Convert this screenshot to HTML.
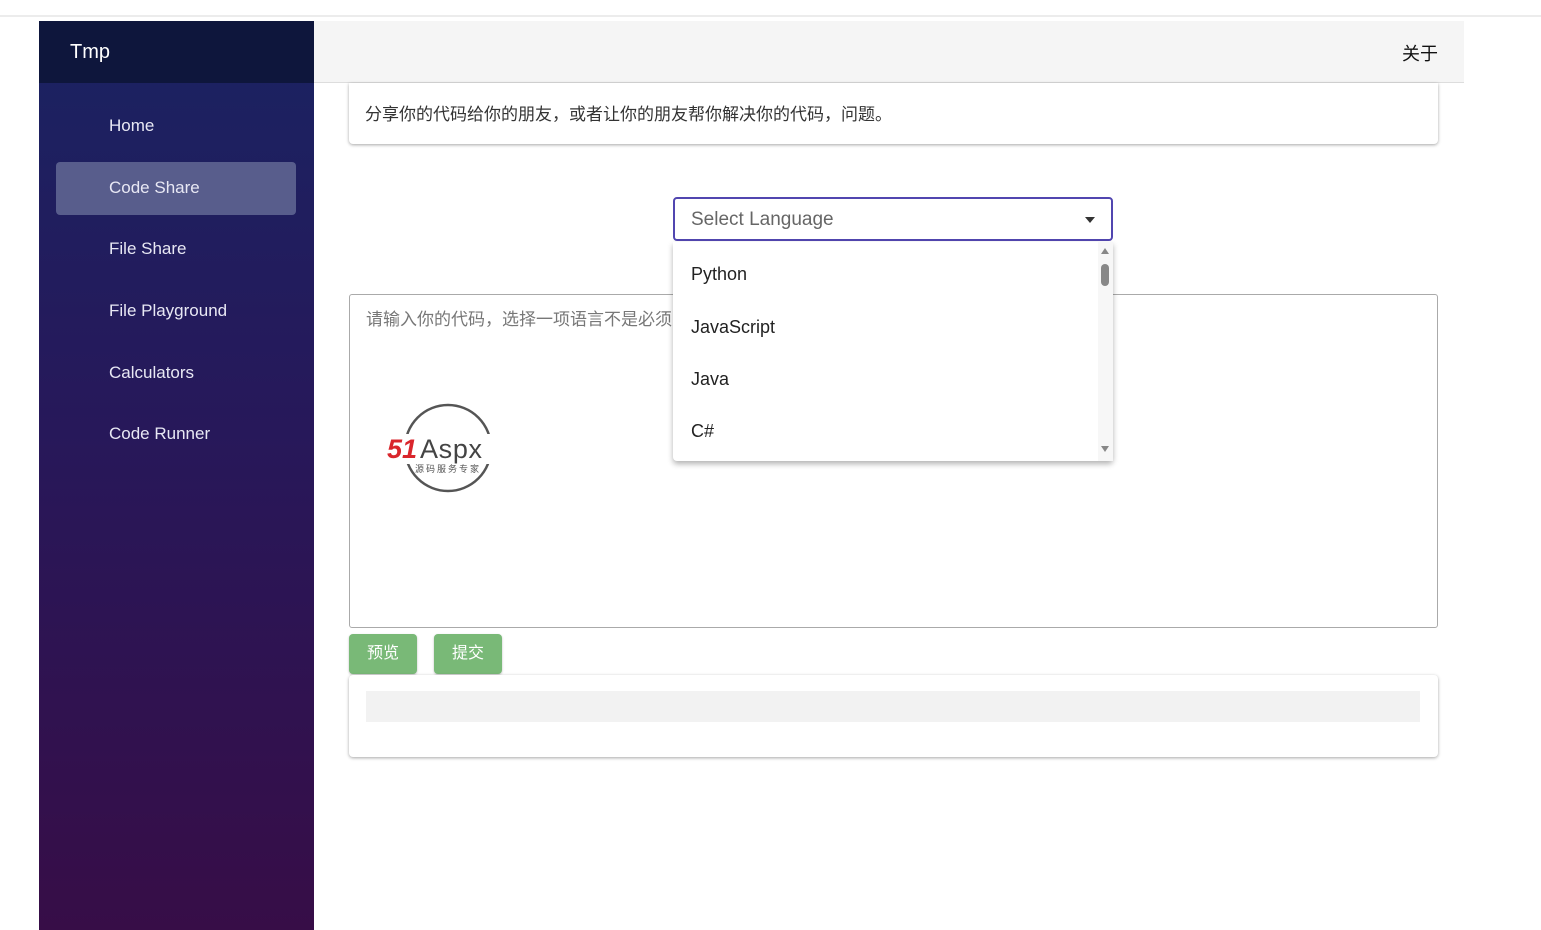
<!DOCTYPE html>
<html><head><meta charset="utf-8"><style>
*{box-sizing:border-box;margin:0;padding:0}
body{width:1541px;height:930px;overflow:hidden;background:#fff;font-family:"Liberation Sans","Noto Sans CJK SC",sans-serif;position:relative}
.topbar{position:absolute;left:0;top:0;width:1541px;height:17px;background:#fff;border-bottom:2px solid #ececec}
.side{position:absolute;left:39px;top:21px;width:275px;height:909px;background:linear-gradient(#1a2362 0%,#27185a 45%,#370d47 100%)}
.side .hd{height:62px;background:#0e163c;color:#fff;font-size:20px;padding:20px 0 0 31px}
.nav{position:absolute;left:17px;width:240px;height:53px;border-radius:4px;color:#e8e8f4;font-size:17px;padding:16px 0 0 53px}
.nav.act{background:#585d8c}
.head{position:absolute;left:314px;top:21px;width:1150px;height:62px;background:#f5f5f5;border-bottom:1px solid #ddd}
.head span{position:absolute;right:26px;top:19px;font-size:18px;color:#111}
.card{position:absolute;background:#fff;border-radius:4px;box-shadow:0 1px 3px rgba(0,0,0,.35)}
.sel{position:absolute;left:673px;top:197px;width:440px;height:44px;border:2px solid #5146b0;border-radius:4px;font-size:19px;color:#666;padding:10px 0 0 16px;background:#fff}
.sel:after{content:"";position:absolute;right:16px;top:18px;border:5px solid transparent;border-top:6px solid #333}
.ta{position:absolute;left:349px;top:294px;width:1089px;height:334px;border:1px solid #aaa;border-radius:3px;font-size:17px;color:#777;padding:10px 16px}
.dd{position:absolute;left:673px;top:242px;width:440px;height:219px;background:#fff;box-shadow:0 3px 6px rgba(0,0,0,.3);border-radius:0 0 4px 4px}
.dd .it{position:absolute;left:18px;font-size:18px;color:#222}
.sb{position:absolute;left:425px;top:0;width:15px;height:219px;background:#f7f7f7}
.btn{position:absolute;top:634px;width:68px;height:40px;background:#79b977;border-radius:4px;color:#fff;font-size:16px;text-align:center;line-height:40px;box-shadow:0 1px 2px rgba(0,0,0,.25)}
</style></head><body>
<div class="topbar"></div>
<div class="side"><div class="hd">Tmp</div>
<div class="nav" style="top:79px">Home</div>
<div class="nav act" style="top:141px">Code Share</div>
<div class="nav" style="top:202px">File Share</div>
<div class="nav" style="top:264px">File Playground</div>
<div class="nav" style="top:326px">Calculators</div>
<div class="nav" style="top:387px">Code Runner</div>
</div>
<div class="head"><span>关于</span></div>
<div class="card" style="left:349px;top:83px;width:1089px;height:61px;border-radius:0 0 4px 4px"><div style="padding:17px 0 0 16px;font-size:17px;color:#333">分享你的代码给你的朋友，或者让你的朋友帮你解决你的代码，问题。</div></div>
<div class="sel">Select Language</div>
<div class="ta">请输入你的代码，选择一项语言不是必须的
<svg style="position:absolute;left:37px;top:107px" width="126" height="92" viewBox="0 0 126 92">
<circle cx="61" cy="46" r="43" fill="none" stroke="#555" stroke-width="2.5"/>
<rect x="0" y="32" width="126" height="30" fill="#fff"/>
<text x="0" y="56" font-family="Liberation Sans" font-weight="bold" font-style="italic" font-size="27" fill="#d9262c">51</text>
<text x="33" y="56" font-family="Liberation Sans" font-size="27" fill="#444" textLength="62">Aspx</text>
<text x="96" y="56" font-family="Liberation Sans" font-size="1" fill="#4caf50"> </text>
<text x="28" y="70" font-family="Noto Sans CJK SC" font-size="9" fill="#555" textLength="64">源码服务专家</text>
</svg></div>
<div class="dd"><div class="it" style="top:22px">Python</div><div class="it" style="top:75px">JavaScript</div><div class="it" style="top:127px">Java</div><div class="it" style="top:179px">C#</div>
<div class="sb"><div style="position:absolute;left:3px;top:22px;width:8px;height:22px;background:#888;border-radius:4px"></div>
<div style="position:absolute;left:3px;top:6px;width:0;height:0;border:4px solid transparent;border-bottom:6px solid #888;border-top:0"></div>
<div style="position:absolute;left:3px;top:204px;width:0;height:0;border:4px solid transparent;border-top:6px solid #888;border-bottom:0"></div></div></div>
<div class="btn" style="left:349px">预览</div>
<div class="btn" style="left:434px">提交</div>
<div class="card" style="left:349px;top:675px;width:1089px;height:82px"><div style="position:absolute;left:17px;top:16px;width:1054px;height:31px;background:#f2f2f2"></div></div>
</body></html>
